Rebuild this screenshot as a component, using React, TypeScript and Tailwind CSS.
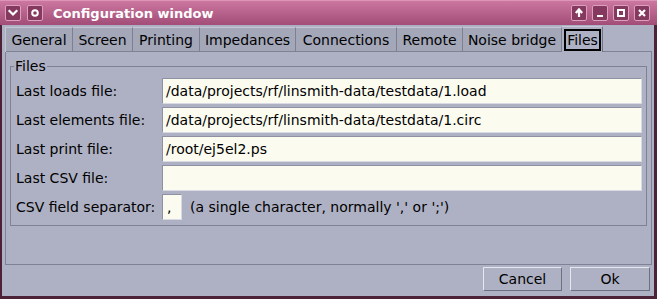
import React from "react";

function TBtn({ children }: { children: React.ReactNode }) {
  return (
    <div className="w-[16px] h-[16px] rounded-[2px] border border-[#dca0bc] bg-[#86395e] flex items-center justify-center">
      <svg width="12" height="12" viewBox="0 0 12 12">{children}</svg>
    </div>
  );
}

function Tab({ label, w }: { label: string; w: number }) {
  return (
    <div
      style={{ width: w }}
      className="h-[25px] bg-[#a3a7b8] border-t border-t-[#c3c6d3] border-r border-r-[#7c8091] border-b border-b-[#7e8294] flex items-center justify-center leading-none"
    >
      {label}
    </div>
  );
}

function Field({ label, value }: { label: string; value: string }) {
  return (
    <div className="flex items-center h-[26px]">
      <div className="w-[146px] leading-none">{label}</div>
      <div className="flex-1 h-[26px] bg-[#fbfbf0] border border-t-[#8e91a1] border-l-[#8e91a1] border-b-[#d9dbe4] border-r-[#d9dbe4] pl-[3px] flex items-center leading-none">
        {value}
      </div>
    </div>
  );
}

export default function App() {
  return (
    <div className="w-[657px] h-[299px] bg-[#4b2238] flex flex-col font-['DejaVu_Sans',sans-serif] text-[14px] text-black overflow-hidden">
      {/* Title bar */}
      <div className="h-[25px] flex items-center pl-[5px] pr-[7px] bg-gradient-to-b from-[#cc77a0] to-[#a24d77] border-t border-t-[#de94b6]">
        <div className="flex gap-[6px]">
          <TBtn>
            <path d="M2.5 4 L6 7.5 L9.5 4" stroke="white" strokeWidth="2.2" fill="none" strokeLinecap="square" />
          </TBtn>
          <TBtn>
            <circle cx="6" cy="6" r="2.8" stroke="white" strokeWidth="2" fill="none" />
          </TBtn>
        </div>
        <div className="ml-[10px] text-white font-bold text-[13px] leading-none flex-1">Configuration window</div>
        <div className="flex gap-[5px]">
          <TBtn>
            <path d="M6 10 L6 3 M2.8 6 L6 2.5 L9.2 6" stroke="white" strokeWidth="2.2" fill="none" />
          </TBtn>
          <TBtn>
            <rect x="3" y="8" width="6" height="2" fill="white" />
          </TBtn>
          <TBtn>
            <rect x="3" y="3" width="6" height="6" stroke="white" strokeWidth="2" fill="none" />
          </TBtn>
          <TBtn>
            <path d="M3 3 L9 9 M9 3 L3 9" stroke="white" strokeWidth="2.2" fill="none" />
          </TBtn>
        </div>
      </div>

      {/* Body */}
      <div className="flex-1 ml-[2px] mr-[3px] mb-[3px] bg-[#aeb1c3] flex flex-col pl-[3px] pr-[2px] pt-[2px] pb-[5px]">
        {/* Tabs */}
        <div className="flex items-end h-[25px]">
          <div className="border-l border-l-[#c3c6d3] flex">
            <Tab label="General" w={67} />
          </div>
          <Tab label="Screen" w={60} />
          <Tab label="Printing" w={67} />
          <Tab label="Impedances" w={96} />
          <Tab label="Connections" w={101} />
          <Tab label="Remote" w={66} />
          <Tab label="Noise bridge" w={99} />
          <div className="w-[41px] h-[26px] bg-[#aeb1c3] border-t border-t-[#c8cbd7] border-r border-r-[#6f7384] flex items-center pl-[2px] pt-[1px]">
            <div className="border-2 border-black h-[22px] w-[37px] flex items-center justify-center leading-none">Files</div>
          </div>
          <div className="flex-1 h-[25px] border-b border-b-[#7e8294]" />
        </div>

        {/* Panel */}
        <div className="h-[213px] border-l border-r border-b border-[#7e8294] px-[4px] pt-[14px]">
          <div className="relative h-[160px] border border-[#7f8294] pl-[5px] pr-[4px] pt-[11px] flex flex-col gap-[3px]">
            <div className="absolute -top-[9px] left-[3px] px-[1px] bg-[#aeb1c3] leading-[16px]">Files</div>
            <Field label="Last loads file:" value="/data/projects/rf/linsmith-data/testdata/1.load" />
            <Field label="Last elements file:" value="/data/projects/rf/linsmith-data/testdata/1.circ" />
            <Field label="Last print file:" value="/root/ej5el2.ps" />
            <Field label="Last CSV file:" value="" />
            <div className="flex items-center h-[26px]">
              <div className="w-[146px] leading-none">CSV field separator:</div>
              <div className="w-[20px] h-[26px] bg-[#fbfbf0] border border-t-[#8e91a1] border-l-[#8e91a1] border-b-[#d9dbe4] border-r-[#d9dbe4] pl-[4px] flex items-center leading-none">
                ,
              </div>
              <div className="ml-[8px] leading-none">(a single character, normally ',' or ';')</div>
            </div>
          </div>
        </div>

        {/* Buttons */}
        <div className="flex justify-end gap-[8px] mt-[2px] mr-[2px]">
          <div className="w-[79px] h-[24px] border border-t-[#e6e8ef] border-l-[#e6e8ef] border-b-[#6d7081] border-r-[#6d7081] flex items-center justify-center leading-none">
            Cancel
          </div>
          <div className="w-[80px] h-[24px] border border-t-[#e6e8ef] border-l-[#e6e8ef] border-b-[#6d7081] border-r-[#6d7081] flex items-center justify-center leading-none">
            Ok
          </div>
        </div>
      </div>
    </div>
  );
}
